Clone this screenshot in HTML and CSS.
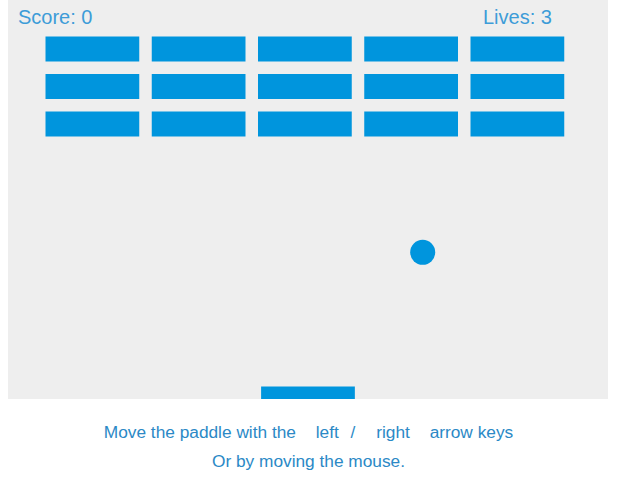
FILE: index.html
```html
<!DOCTYPE html>
<html>
<head>
<meta charset="utf-8">
<title>Breakout</title>
<link rel="stylesheet" href="styles.css">
</head>
<body>
<svg class="game" width="600" height="399" viewBox="0 0 600 399">
  <g transform="translate(0,-1)">
    <rect class="bg" x="0" y="0" width="600" height="400"/>
    <g class="bricks">
      <rect x="37.5" y="37.5" width="93.75" height="25"/>
      <rect x="143.75" y="37.5" width="93.75" height="25"/>
      <rect x="250" y="37.5" width="93.75" height="25"/>
      <rect x="356.25" y="37.5" width="93.75" height="25"/>
      <rect x="462.5" y="37.5" width="93.75" height="25"/>
      <rect x="37.5" y="75" width="93.75" height="25"/>
      <rect x="143.75" y="75" width="93.75" height="25"/>
      <rect x="250" y="75" width="93.75" height="25"/>
      <rect x="356.25" y="75" width="93.75" height="25"/>
      <rect x="462.5" y="75" width="93.75" height="25"/>
      <rect x="37.5" y="112.5" width="93.75" height="25"/>
      <rect x="143.75" y="112.5" width="93.75" height="25"/>
      <rect x="250" y="112.5" width="93.75" height="25"/>
      <rect x="356.25" y="112.5" width="93.75" height="25"/>
      <rect x="462.5" y="112.5" width="93.75" height="25"/>
    </g>
    <circle class="ball" cx="414.7" cy="253.3" r="12.5"/>
    <rect class="paddle" x="253.1" y="387.5" width="93.75" height="12.5"/>
    <text class="hud" x="10" y="25">Score: 0</text>
    <text class="hud" x="475" y="25">Lives: 3</text>
  </g>
</svg>
<p class="help">Move the paddle with the <span class="key key-left">left</span> / <span class="key key-right">right</span> arrow keys<br>Or by moving the mouse.</p>
</body>
</html>
```
FILE: styles.css
```css
html, body {
  background: #fff;
}
body {
  margin: 0 8px 8px 8px;
  font-family: "Liberation Sans", Arial, sans-serif;
}
.game {
  display: block;
}
.bg {
  fill: #eeeeee;
}
.bricks rect,
.ball,
.paddle {
  fill: #0095dd;
}
.hud {
  font-family: "Liberation Sans", Arial, sans-serif;
  font-size: 20px;
  fill: #3d9cd8;
}
.help {
  margin: 19px 0 0 0;
  text-align: center;
  font-size: 17.3px;
  line-height: 29px;
  color: #2b89c6;
}
.key-left {
  margin-left: 15px;
  margin-right: 7px;
}
.key-right {
  margin-left: 16px;
  margin-right: 15px;
}
```
